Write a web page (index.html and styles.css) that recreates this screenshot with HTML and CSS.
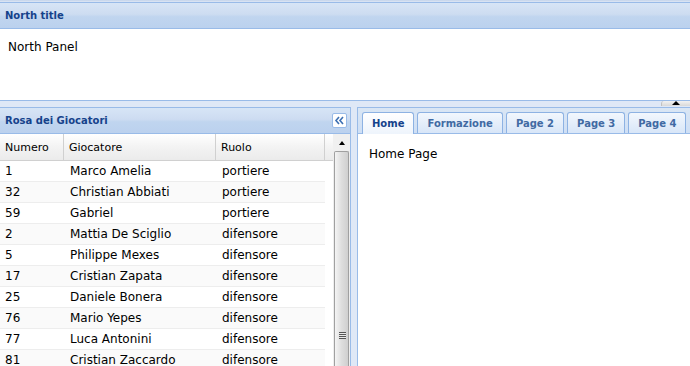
FILE: index.html
```html
<!DOCTYPE html>
<html lang="it">
<head>
    <meta charset="UTF-8">
    <title>Rosa</title>
    <link rel="stylesheet" href="styles.css">
</head>
<body>
    <div class="viewport">
        <div class="panel north">
            <div class="panel-header">North title</div>
            <div class="panel-body north-body">North Panel</div>
        </div>
        <div class="hsplit">
            <div class="mini-tab"><span class="arrow-up"></span></div>
        </div>
        <div class="south-row">
            <div class="panel west">
                <div class="panel-header west-header">
                    <span>Rosa dei Giocatori</span>
                    <span class="collapse-btn">
                        <svg width="13" height="13" viewBox="0 0 13 13">
                            <path d="M6 3 L3 6.5 L6 10 M10 3 L7 6.5 L10 10" fill="none" stroke="#3d70b3" stroke-width="1.6"/>
                        </svg>
                    </span>
                </div>
                <div class="grid">
                    <div class="grid-main">
                        <div class="grid-head">
                            <div class="col c-num">Numero</div>
                            <div class="col c-name">Giocatore</div>
                            <div class="col c-role">Ruolo</div>
                            <div class="col c-pad"></div>
                        </div>
                        <div class="grid-rows" id="rows"></div>
                    </div>
                    <div class="scrollbar">
                        <div class="sb-btn"><span class="arrow-up small"></span></div>
                        <div class="sb-thumb">
                            <div class="grip"></div>
                        </div>
                    </div>
                </div>
            </div>
            <div class="vsplit"></div>
            <div class="panel center">
                <div class="tab-strip">
                    <div class="tab active">Home</div>
                    <div class="tab">Formazione</div>
                    <div class="tab">Page 2</div>
                    <div class="tab">Page 3</div>
                    <div class="tab">Page 4</div>
                </div>
                <div class="tab-body">Home Page</div>
            </div>
        </div>
    </div>

    <script>
        const players = [
            ['1', 'Marco Amelia', 'portiere'],
            ['32', 'Christian Abbiati', 'portiere'],
            ['59', 'Gabriel', 'portiere'],
            ['2', 'Mattia De Sciglio', 'difensore'],
            ['5', 'Philippe Mexes', 'difensore'],
            ['17', 'Cristian Zapata', 'difensore'],
            ['25', 'Daniele Bonera', 'difensore'],
            ['76', 'Mario Yepes', 'difensore'],
            ['77', 'Luca Antonini', 'difensore'],
            ['81', 'Cristian Zaccardo', 'difensore']
        ];
        const rows = document.getElementById('rows');
        players.forEach(function(p, i) {
            const row = document.createElement('div');
            row.className = 'row' + (i % 2 ? ' alt' : '');
            row.innerHTML = '<div class="cell c-num">' + p[0] + '</div>' +
                '<div class="cell c-name">' + p[1] + '</div>' +
                '<div class="cell c-role">' + p[2] + '</div>';
            rows.appendChild(row);
        });
    </script>
</body>
</html>
```

FILE: styles.css
```css
body {
    margin: 0;
    font-family: "DejaVu Sans", Verdana, sans-serif;
    font-size: 12px;
    background-color: #dfe8f6;
    overflow: hidden;
}
.viewport {
    width: 690px;
    height: 366px;
    display: flex;
    flex-direction: column;
    padding-top: 2px;
    box-sizing: border-box;
    background: linear-gradient(#c3d3ea, #dfe8f6 2px);
}
.panel {
    border: 1px solid #99bbe8;
    background-color: #fff;
}
.panel-header {
    height: 25px;
    line-height: 25px;
    padding: 0 5px;
    font-size: 10px;
    font-weight: bold;
    color: #15428b;
    background: linear-gradient(#d7e5f6, #cddcf1 45%, #c0d5ef 55%, #bbd1ee);
    border-bottom: 1px solid #99bbe8;
    flex-shrink: 0;
}
.north {
    border-left: none;
    border-right: none;
    flex-shrink: 0;
}
.north-body {
    height: 71px;
    padding: 11px 8px 0;
    box-sizing: border-box;
}
.hsplit {
    height: 6px;
    position: relative;
    flex-shrink: 0;
}
.mini-tab {
    position: absolute;
    right: 0;
    top: 0;
    width: 28px;
    height: 5px;
    background: linear-gradient(#f2f2f2, #d8d8d8);
    border-left: 1px solid #c0c0c0;
    border-radius: 3px 0 0 0;
    display: flex;
    justify-content: center;
}
.arrow-up {
    width: 0;
    height: 0;
    border-left: 4px solid transparent;
    border-right: 4px solid transparent;
    border-bottom: 4px solid #000;
}
.south-row {
    flex: 1;
    display: flex;
    min-height: 0;
}
.west {
    width: 351px;
    box-sizing: border-box;
    border-left: none;
    border-bottom: none;
    display: flex;
    flex-direction: column;
}
.west-header {
    display: flex;
    justify-content: space-between;
    align-items: center;
    padding-right: 3px;
}
.collapse-btn {
    width: 13px;
    height: 13px;
    background-color: #fff;
    border: 1px solid #99bbe8;
    border-radius: 2px;
    display: flex;
}
.grid {
    flex: 1;
    display: flex;
    min-height: 0;
    overflow: hidden;
}
.grid-main {
    flex: 1;
    overflow: hidden;
}
.grid-head {
    display: flex;
    height: 26px;
    line-height: 27px;
    background: linear-gradient(#ffffff, #f3f3f3 50%, #ebebeb);
    border-bottom: 1px solid #d0d0d0;
}
.grid-head .col {
    padding-left: 5px;
    border-right: 1px solid #d0d0d0;
    box-sizing: border-box;
    font-size: 11px;
}
.c-num {
    width: 64px;
}
.c-name {
    width: 152px;
}
.c-role {
    width: 109px;
}
.c-pad {
    flex: 1;
}
.grid-head .c-pad {
    border-right: none;
    padding: 0;
}
.row {
    display: flex;
    height: 20px;
    line-height: 21px;
    border-bottom: 1px solid #ededed;
    width: 325px;
    font-size: 12px;
}
.row.alt {
    background-color: #fafafa;
}
.cell {
    padding-left: 5px;
    box-sizing: border-box;
    color: #000;
    white-space: nowrap;
}
.row .c-name,
.row .c-role {
    padding-left: 6px;
}
.scrollbar {
    width: 17px;
    display: flex;
    flex-direction: column;
    background-color: #eee;
}
.sb-btn {
    height: 17px;
    display: flex;
    justify-content: center;
    align-items: center;
    background-color: #f0f0f0;
}
.arrow-up.small {
    border-left-width: 3px;
    border-right-width: 3px;
    border-bottom-width: 4px;
}
.sb-thumb {
    flex: 1;
    margin: 0 1px;
    border: 1px solid #a0a0a0;
    border-bottom: none;
    border-radius: 2px 2px 0 0;
    background: linear-gradient(90deg, #f4f4f4, #dedede 50%, #cfcfcf);
    position: relative;
}
.grip {
    position: absolute;
    top: 180px;
    left: 4px;
    width: 7px;
    height: 7px;
    background: repeating-linear-gradient(#555 0 1px, #e8e8e8 1px 2px);
}
.vsplit {
    width: 6px;
    flex-shrink: 0;
}
.center {
    flex: 1;
    min-width: 0;
    border-right: none;
    border-bottom: none;
    display: flex;
    flex-direction: column;
}
.tab-strip {
    height: 25px;
    display: flex;
    align-items: flex-end;
    gap: 3px;
    padding-left: 4px;
    background: linear-gradient(#dae6f4, #cedff5);
    border-bottom: 1px solid #99bbe8;
    flex-shrink: 0;
}
.tab {
    flex-shrink: 0;
    white-space: nowrap;
    height: 20px;
    line-height: 21px;
    padding: 0 9px;
    font-size: 10px;
    font-weight: bold;
    color: #416aa3;
    background: linear-gradient(#f2f7fd, #d8e6f8);
    border: 1px solid #8db2e3;
    border-bottom: none;
    border-radius: 3px 3px 0 0;
}
.tab.active {
    color: #15428b;
    background: linear-gradient(#ffffff, #eef4fc);
    height: 21px;
    margin-bottom: -1px;
}
.tab-body {
    padding: 13px 11px;
}
```
